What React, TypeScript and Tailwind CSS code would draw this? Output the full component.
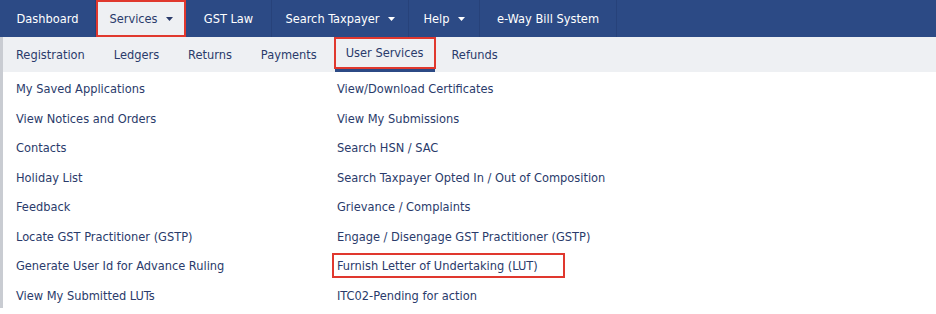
const topNav = [
  { label: 'Dashboard', w: 'w-[96px]' },
  { label: 'Services', w: 'w-[90px]', caret: true, active: true },
  { label: 'GST Law', w: 'w-[86px]' },
  { label: 'Search Taxpayer', w: 'w-[137px]', caret: true },
  { label: 'Help', w: 'w-[71px]', caret: true },
  { label: 'e-Way Bill System', w: 'w-[137px]' },
];

const subNav = ['Registration', 'Ledgers', 'Returns', 'Payments', 'User Services', 'Refunds'];

const leftCol = [
  'My Saved Applications',
  'View Notices and Orders',
  'Contacts',
  'Holiday List',
  'Feedback',
  'Locate GST Practitioner (GSTP)',
  'Generate User Id for Advance Ruling',
  'View My Submitted LUTs',
];

const rightCol = [
  'View/Download Certificates',
  'View My Submissions',
  'Search HSN / SAC',
  'Search Taxpayer Opted In / Out of Composition',
  'Grievance / Complaints',
  'Engage / Disengage GST Practitioner (GSTP)',
  'Furnish Letter of Undertaking (LUT)',
  'ITC02-Pending for action',
];

function Caret({ dark }: { dark?: boolean }) {
  return (
    <svg width="7" height="4" viewBox="0 0 7 4" className="ml-[8px] mt-[1px]">
      <path d="M0 0h7L3.5 4z" fill={dark ? '#2a3b6b' : '#ffffff'} />
    </svg>
  );
}

export default function App() {
  return (
    <div
      className="w-[936px] h-[314px] bg-white text-[12.7px] overflow-hidden"
      style={{ fontFamily: '"DejaVu Sans Condensed", "DejaVu Sans", Verdana, sans-serif' }}
    >
      {/* Top navigation */}
      <div className="flex h-[37px] bg-[#2c4a85]">
        {topNav.map((item) =>
          item.active ? (
            <div
              key={item.label}
              className={`${item.w} flex items-center justify-center bg-[#eef0f3] text-[#2a3b6b] border-2 border-[#e0382e]`}
            >
              {item.label}
              {item.caret && <Caret dark />}
            </div>
          ) : (
            <div
              key={item.label}
              className={`${item.w} flex items-center justify-center text-white border-r border-[#27427a]`}
            >
              {item.label}
              {item.caret && <Caret />}
            </div>
          )
        )}
      </div>

      {/* Sub navigation + menu panel */}
      <div className="border-l-[3px] border-[#c9ccd2] h-[271px]">
        <div className="flex h-[35px] bg-[#eef0f3] items-stretch pl-[13px]">
          {subNav.map((label, i) =>
            label === 'User Services' ? (
              <div key={label} className="flex flex-col mr-[16px]">
                <div className="flex items-center h-[32px] px-[10px] border-2 border-[#e0382e] text-[#2a3b6b]">
                  {label}
                </div>
                <div className="h-[3px] bg-[#2c4a85] mx-[1px]" />
              </div>
            ) : (
              <div
                key={label}
                className={`flex items-center text-[#2a3b6b] ${subNav[i + 1] === 'User Services' ? 'mr-[17px]' : 'mr-[29px]'}`}
              >
                {label}
              </div>
            )
          )}
        </div>

        <div className="flex pt-[2px] text-[#2a3b6b]">
          <div className="w-[334px] pl-[13px] flex flex-col">
            {leftCol.map((t) => (
              <div key={t} className="h-[29.5px] flex items-center">
                {t}
              </div>
            ))}
          </div>
          <div className="flex flex-col">
            {rightCol.map((t) =>
              t.startsWith('Furnish') ? (
                <div key={t} className="h-[29.5px] flex items-center">
                  <div className="h-[25px] w-[233px] flex items-center pl-[3px] border-2 border-[#e0382e] -ml-[5px]">
                    {t}
                  </div>
                </div>
              ) : (
                <div key={t} className="h-[29.5px] flex items-center">
                  {t}
                </div>
              )
            )}
          </div>
        </div>
      </div>
    </div>
  );
}
